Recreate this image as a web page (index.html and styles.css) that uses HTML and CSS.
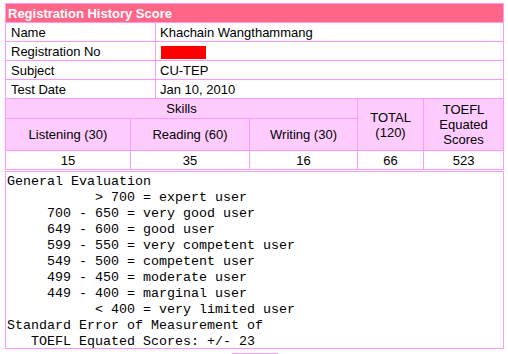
FILE: index.html
```html
<!DOCTYPE html>
<html>
<head>
<meta charset="utf-8">
<title>Registration History Score</title>
<link rel="stylesheet" href="styles.css">
</head>
<body>
<div class="wrap">
  <table class="info">
    <colgroup><col class="c-label"><col class="c-value"></colgroup>
    <tr><td class="title" colspan="2">Registration History Score</td></tr>
    <tr><td>Name</td><td class="val">Khachain Wangthammang</td></tr>
    <tr><td>Registration No</td><td class="val"><span class="redact"></span></td></tr>
    <tr><td>Subject</td><td class="val">CU-TEP</td></tr>
    <tr><td>Test Date</td><td class="val">Jan 10, 2010</td></tr>
  </table>
  <table class="scores">
    <colgroup><col class="s1"><col class="s2"><col class="s3"><col class="s4"><col class="s5"></colgroup>
    <tr class="r-skills">
      <td class="head" colspan="3">Skills</td>
      <td class="head multi" rowspan="2">TOTAL<br>(120)</td>
      <td class="head multi" rowspan="2">TOEFL<br>Equated<br>Scores</td>
    </tr>
    <tr class="r-sub">
      <td class="head">Listening (30)</td>
      <td class="head">Reading (60)</td>
      <td class="head">Writing (30)</td>
    </tr>
    <tr class="r-num">
      <td>15</td><td>35</td><td>16</td><td>66</td><td>523</td>
    </tr>
  </table>
<pre class="eval">General Evaluation
           &gt; 700 = expert user
     700 - 650 = very good user
     649 - 600 = good user
     599 - 550 = very competent user
     549 - 500 = competent user
     499 - 450 = moderate user
     449 - 400 = marginal user
           &lt; 400 = very limited user
Standard Error of Measurement of
   TOEFL Equated Scores: +/- 23</pre>
  <div class="actions"><span class="btn"></span></div>
</div>
</body>
</html>
```
FILE: styles.css
```css
html, body {
  margin: 0;
  padding: 0;
  background: #ffffff;
}
body {
  font-family: "Liberation Sans", Arial, sans-serif;
  font-size: 13px;
  color: #000;
}
.wrap {
  width: 499px;
  margin: 3px 0 0 5px;
}
table {
  border-collapse: separate;
  border-spacing: 0;
  table-layout: fixed;
  width: 499px;
  border-left: 1px solid #ff99ff;
}
td {
  box-sizing: border-box;
  border-right: 1px solid #ff99ff;
  border-bottom: 1px solid #ff99ff;
  padding: 0 0 0 5px;
  line-height: 15px;
  white-space: nowrap;
}
.info {
  border-top: 1px solid #ff99ff;
}
.c-label { width: 150px; }
.c-value { width: 348px; }
.info td { height: 19px; }
.info td.val { padding-left: 4px; }
.info td.title {
  background: #ff6688;
  color: #ffffff;
  font-weight: bold;
  padding-left: 2px;
}
.redact {
  display: inline-block;
  width: 45px;
  height: 13px;
  background: #ff0000;
  vertical-align: middle;
  margin-left: 1px;
}
.s1 { width: 125px; }
.s2 { width: 119px; }
.s3 { width: 108px; }
.s4 { width: 66px; }
.s5 { width: 80px; }
.scores td {
  text-align: center;
  padding: 0;
}
.scores .head { background: #ffccff; }
.r-skills td { height: 20px; }
.r-sub td { height: 32px; }
.r-num td { height: 19px; }
.eval {
  box-sizing: border-box;
  width: 499px;
  height: 178px;
  margin: 1px 0 0 0;
  padding: 2px 1px 0 1px;
  border: 1px solid #ff99ff;
  overflow: visible;
  font-family: "Liberation Mono", "Courier New", monospace;
  font-size: 13.33px;
  line-height: 16px;
  color: #000;
}
.actions {
  display: flex;
  justify-content: center;
  margin-top: 4px;
}
.btn {
  display: block;
  width: 46px;
  height: 0;
  border-top: 1px solid #ff99ff;
}
```
